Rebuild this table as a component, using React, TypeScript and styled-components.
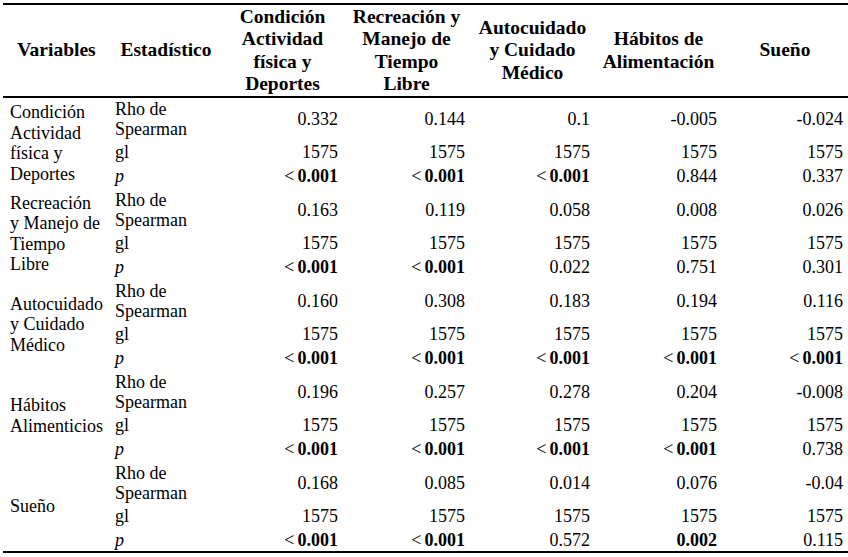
import React from "react";
import styled, { createGlobalStyle } from "styled-components";

const Global = createGlobalStyle`
  html, body { margin: 0; padding: 0; background: #ffffff; }
  body { font-family: "Liberation Serif", "Times New Roman", serif; color: #000; }
`;

const Page = styled.div`
  padding: 3px 0 0 3px;
  width: 845px;
`;

const Table = styled.table`
  width: 845px;
  border-collapse: collapse;
  table-layout: fixed;
  border-top: 2px solid #000;
  border-bottom: 2px solid #000;
  font-family: "Liberation Serif", "Times New Roman", serif;
`;

const HeadRow = styled.tr`
  height: 93px;
  border-bottom: 2px solid #000;
`;

const HeadCell = styled.th`
  font-size: 19.5px;
  line-height: 22.5px;
  font-weight: 700;
  text-align: center;
  vertical-align: middle;
  padding: 0 2px;
`;

type Kind = "rho" | "gl" | "p";

const heights: Record<Kind, number> = { rho: 43, gl: 24, p: 24 };

const Row = styled.tr<{ $kind: Kind }>`
  height: ${(p) => heights[p.$kind]}px;
`;

const VarCell = styled.td`
  font-size: 18px;
  line-height: 20.5px;
  vertical-align: middle;
  padding: 0 0 0 7px;
  white-space: nowrap;
`;

const StatCell = styled.td`
  font-size: 18px;
  line-height: 20px;
  vertical-align: middle;
  padding: 0 0 0 5px;
`;

const NumCell = styled.td`
  font-size: 18px;
  line-height: 20px;
  text-align: right;
  vertical-align: middle;
  padding: 0 5px 0 0;
  white-space: nowrap;
`;

const Italic = styled.span`
  font-style: italic;
`;

const Lt = styled.span`
  font-weight: 400;
  margin-right: 3px;
`;

const Strong = styled.span`
  font-weight: 700;
`;

const colWidths = [107, 112, 121, 127, 125, 127, 126];

const headers: string[][] = [
  ["Variables"],
  ["Estadístico"],
  ["Condición", "Actividad", "física y", "Deportes"],
  ["Recreación y", "Manejo de", "Tiempo", "Libre"],
  ["Autocuidado", "y Cuidado", "Médico"],
  ["Hábitos de", "Alimentación"],
  ["Sueño"],
];

type Group = {
  name: string[];
  rho: string[];
  p: string[];
};

const groups: Group[] = [
  {
    name: ["Condición", "Actividad", "física y", "Deportes"],
    rho: ["0.332", "0.144", "0.1", "-0.005", "-0.024"],
    p: ["<0.001", "<0.001", "<0.001", "0.844", "0.337"],
  },
  {
    name: ["Recreación", "y Manejo de", "Tiempo", "Libre"],
    rho: ["0.163", "0.119", "0.058", "0.008", "0.026"],
    p: ["<0.001", "<0.001", "0.022", "0.751", "0.301"],
  },
  {
    name: ["Autocuidado", "y Cuidado", "Médico"],
    rho: ["0.160", "0.308", "0.183", "0.194", "0.116"],
    p: ["<0.001", "<0.001", "<0.001", "<0.001", "<0.001"],
  },
  {
    name: ["Hábitos", "Alimenticios"],
    rho: ["0.196", "0.257", "0.278", "0.204", "-0.008"],
    p: ["<0.001", "<0.001", "<0.001", "<0.001", "0.738"],
  },
  {
    name: ["Sueño"],
    rho: ["0.168", "0.085", "0.014", "0.076", "-0.04"],
    p: ["<0.001", "<0.001", "0.572", "0.002", "0.115"],
  },
];

const Lines: React.FC<{ lines: string[] }> = ({ lines }) => (
  <>
    {lines.map((l, i) => (
      <React.Fragment key={i}>
        {i > 0 && <br />}
        {l}
      </React.Fragment>
    ))}
  </>
);

const PValue: React.FC<{ v: string }> = ({ v }) => {
  if (v.startsWith("<")) {
    return (
      <>
        <Lt>&lt;</Lt>
        <Strong>{v.slice(1)}</Strong>
      </>
    );
  }
  if (v === "0.002") return <Strong>{v}</Strong>;
  return <>{v}</>;
};

export default function App() {
  return (
    <Page>
      <Global />
      <Table>
        <colgroup>
          {colWidths.map((w, i) => (
            <col key={i} style={{ width: w }} />
          ))}
        </colgroup>
        <thead>
          <HeadRow>
            {headers.map((h, i) => (
              <HeadCell key={i}>
                <Lines lines={h} />
              </HeadCell>
            ))}
          </HeadRow>
        </thead>
        <tbody>
          {groups.map((g, gi) => (
            <React.Fragment key={gi}>
              <Row $kind="rho">
                <VarCell rowSpan={3}>
                  <Lines lines={g.name} />
                </VarCell>
                <StatCell>
                  Rho de
                  <br />
                  Spearman
                </StatCell>
                {g.rho.map((v, i) => (
                  <NumCell key={i}>{v}</NumCell>
                ))}
              </Row>
              <Row $kind="gl">
                <StatCell>gl</StatCell>
                {g.rho.map((_, i) => (
                  <NumCell key={i}>1575</NumCell>
                ))}
              </Row>
              <Row $kind="p">
                <StatCell>
                  <Italic>p</Italic>
                </StatCell>
                {g.p.map((v, i) => (
                  <NumCell key={i}>
                    <PValue v={v} />
                  </NumCell>
                ))}
              </Row>
            </React.Fragment>
          ))}
        </tbody>
      </Table>
    </Page>
  );
}
